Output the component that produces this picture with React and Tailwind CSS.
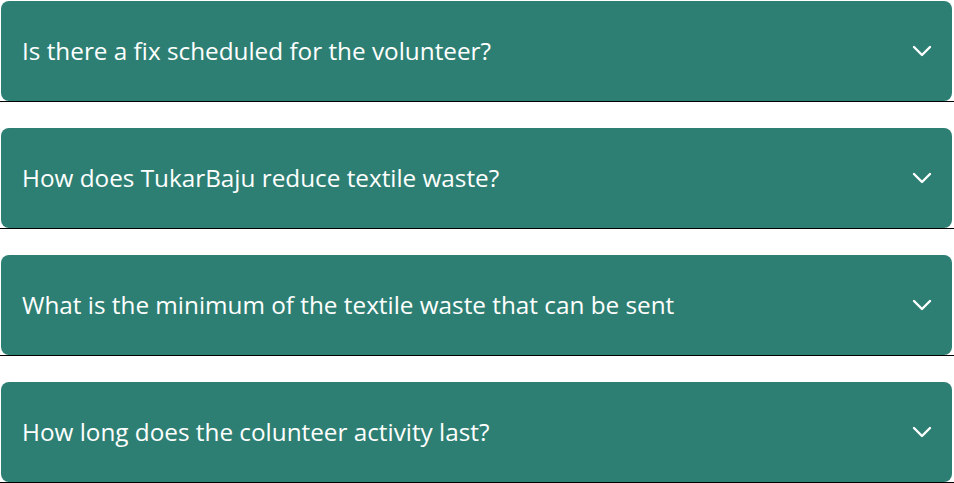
import {useState} from "react";

const faqs = [
    "Is there a fix scheduled for the volunteer?",
    "How does TukarBaju reduce textile waste?",
    "What is the minimum of the textile waste that can be sent",
    "How long does the colunteer activity last?",
];

function Chevron() {
    return (
        <svg width="20" height="12" viewBox="0 0 20 12" fill="none" className="shrink-0">
            <polyline points="2,2 10,10 18,2" stroke="white" strokeWidth="2.4" strokeLinecap="round" strokeLinejoin="round" />
        </svg>
    );
}

export default function App() {
    const [open, setOpen] = useState(null);

    return (
        <div className="w-[954px] bg-white flex flex-col gap-[25px]" style={{fontFamily: '"Open Sans", sans-serif'}}>
            {faqs.map((q, i) => (
                <div key={q} className="border-b border-black pt-px">
                    <button
                        onClick={() => setOpen(open === i ? null : i)}
                        className="mx-px w-[951px] h-[100px] rounded-lg bg-[#2e7f73] flex items-center justify-between pl-[21px] pr-[20px] text-left"
                    >
                        <span className="text-white text-[24.3px] font-normal leading-none">{q}</span>
                        <Chevron />
                    </button>
                </div>
            ))}
        </div>
    );
}
